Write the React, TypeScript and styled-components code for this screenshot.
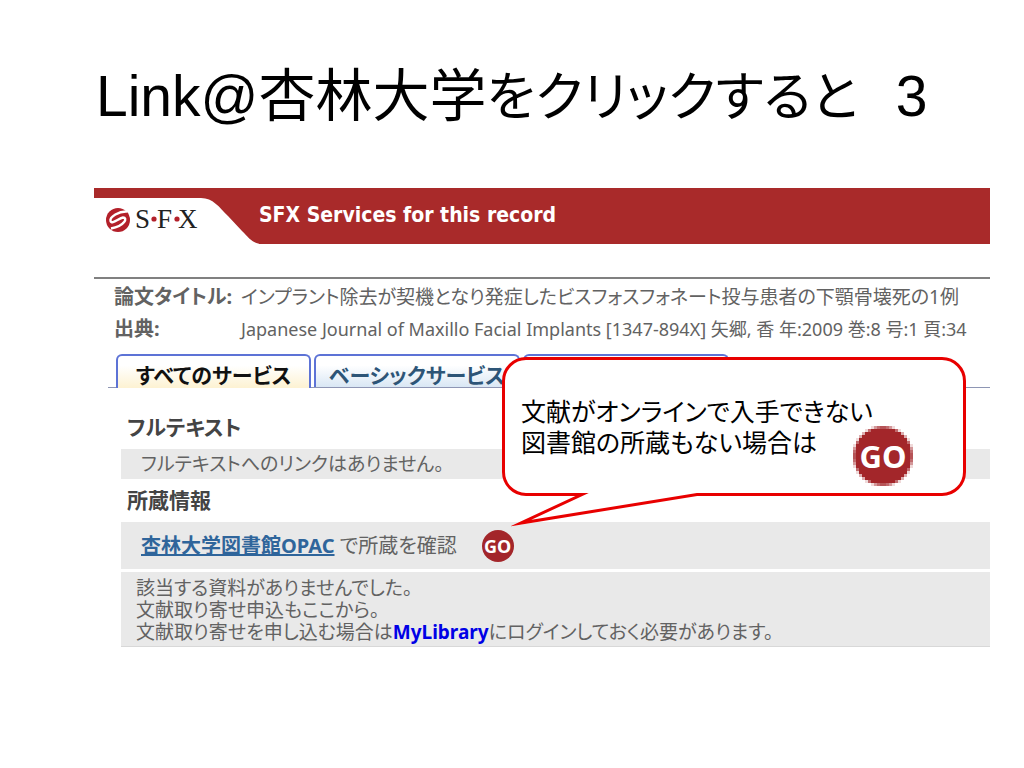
import React from "react";
import styled, { createGlobalStyle } from "styled-components";

const Global = createGlobalStyle`
  * { box-sizing: border-box; }
  body { margin: 0; background: #fff; }
  h1, h2, p, dl, dt, dd { margin: 0; }
`;

const Slide = styled.main`
  min-height: 100vh;
  padding: 60px 34px 60px 94px;
  color: #000;
  font-family: "Liberation Sans", "Noto Sans CJK JP", sans-serif;
`;

const SlideTitle = styled.h1`
  margin-bottom: 56px;
  padding-left: 2px;
  font-size: 57px;
  font-weight: 400;
  line-height: 72px;
  white-space: nowrap;
  font-feature-settings: "palt";
`;

const Kana = styled.span`
  font-size: 53px;
  line-height: 1;
`;

const Gap = styled.span`
  font-size: 38px;
  line-height: 1;
`;

const Record = styled.section`
  position: relative;
  color: #626262;
  font-family: "Noto Sans", "Noto Sans CJK JP", sans-serif;
  font-size: 19px;
  line-height: 32px;
  white-space: nowrap;
  font-feature-settings: "palt";
`;

const Banner = styled.header`
  display: flex;
  height: 56px;
  background: #a92a2a;
`;

const Logo = styled.svg`
  flex: none;
  display: block;
  width: 165px;
  height: 56px;
`;

const BannerTitle = styled.h2`
  color: #fff;
  font-family: "DejaVu Sans Condensed", "Noto Sans", sans-serif;
  font-size: 21px;
  font-weight: 700;
  line-height: 55px;
`;

const Meta = styled.dl`
  display: grid;
  grid-template-columns: 127px 1fr;
  margin-top: 33px;
  padding: 2px 0 9px 20px;
  border-top: 2px solid #808080;

  dt {
    font-size: 20px;
    font-weight: 700;
  }
`;

const Citation = styled.dd`
  font-size: 18px;
`;

const Tabs = styled.nav`
  display: flex;
  gap: 3px;
  margin-left: 14px;
  padding-left: 8px;
  border-bottom: 1px solid #8e96b4;
`;

const Tab = styled.button<{ $active?: boolean }>`
  width: ${(p) => (p.$active ? 195 : 206)}px;
  height: ${(p) => (p.$active ? 34 : 33)}px;
  margin-bottom: ${(p) => (p.$active ? -1 : 0)}px;
  padding: 4px 0 0;
  border: 2px solid #5d73d6;
  border-bottom: 0;
  border-radius: 6px 6px 0 0;
  background: linear-gradient(#fff 30%, ${(p) => (p.$active ? "#fdf2d2" : "#d9e7f4")});
  color: ${(p) => (p.$active ? "#111" : "#2d5577")};
  font: 700 21px/28px "Noto Sans CJK JP", sans-serif;
  font-feature-settings: inherit;
`;

const Results = styled.div`
  padding: 18px 0 0 27px;
`;

const GroupTitle = styled.h2`
  padding-left: 6px;
  color: #444;
  font-size: 21px;
  font-weight: 700;
  line-height: 43px;
`;

const Band = styled.div`
  display: flex;
  align-items: center;
  padding-left: 20px;
  background: #e9e9e9;
`;

const EmptyBand = styled(Band)`
  height: 30px;
`;

const ServiceBand = styled(Band)`
  height: 47px;
  gap: 24px;
  font-size: 20px;
`;

const NoteBand = styled(Band)`
  display: block;
  margin-top: 3px;
  padding: 5px 0 3px 15px;
  border-bottom: 1px solid #d8d8d8;
  line-height: 22px;
`;

const Link = styled.a`
  color: #2f659b;
  font-weight: 700;
  text-decoration: underline;
`;

const Highlight = styled.strong`
  color: #0000e6;
`;

const GoButton = styled.button<{ $size: number }>`
  position: relative;
  flex: none;
  display: block;
  width: ${(p) => p.$size}px;
  height: ${(p) => p.$size}px;
  padding: 0;
  border: 0;
  background: none;
  color: #fff;
  font: 700 ${(p) => (p.$size > 40 ? 31 : 18)}px/1 "Noto Sans", sans-serif;

  svg { position: absolute; inset: 0; }
  span { position: relative; }
`;

const Callout = styled.aside`
  position: absolute;
  top: 169px;
  right: 24px;
  display: flex;
  align-items: center;
  width: 464px;
  height: 139px;
  padding: 0 16px 2px;
  border: 3px solid #e80000;
  border-radius: 24px;
  background: #fff;
  color: #000;
  font-family: "Noto Sans CJK JP", sans-serif;
  font-size: 25px;
  line-height: 31px;
`;

const Tail = styled.svg`
  position: absolute;
  top: 132px;
  left: 6px;
  width: 190px;
  height: 36px;
`;

const CalloutGo = styled.div`
  position: absolute;
  right: 50px;
  bottom: 7px;
`;

const SmoothDisc = () => (
  <svg viewBox="0 0 34 34" aria-hidden="true">
    <circle cx="17" cy="17" r="16" fill="#a3262a" />
  </svg>
);

const GRID = 20;
const cells = Array.from({ length: GRID * GRID }, (_, i) => {
  const x = i % GRID;
  const y = Math.floor(i / GRID);
  const distance = Math.hypot(x - 9.5, y - 9.5);
  return { x, y, opacity: Math.max(0, Math.min(1, 10.3 - distance)) };
}).filter((c) => c.opacity > 0);

const PixelDisc = () => (
  <svg viewBox="0 0 20 20" shapeRendering="crispEdges" aria-hidden="true">
    {cells.map((c) => (
      <rect key={`${c.x}-${c.y}`} x={c.x} y={c.y} width="1" height="1" fill="#a3262a" opacity={c.opacity} />
    ))}
  </svg>
);

const SfxLogo = () => (
  <Logo viewBox="0 0 165 56" role="img" aria-label="SFX">
    <path d="M0 10H107C119 10 125 19 134 28L148 43C156 51 159 56 169 56H0Z" fill="#fff" />
    <circle cx="24" cy="32" r="12" fill="#b3202a" />
    <path
      d="M33 23.500C25 23 15.500 29 16.500 33C17.500 37 25 30 29 29.500C34 29.500 31 38 17 40.500"
      fill="none"
      stroke="#fff"
      strokeWidth="2.400"
    />
    <g fill="#222" fontFamily="Liberation Serif, serif" fontSize="27">
      <text x="41" y="40">S</text>
      <text x="63" y="40">F</text>
      <text x="84" y="40">X</text>
    </g>
    <circle cx="60" cy="31" r="2.6" fill="#b3202a" />
    <circle cx="83" cy="31" r="2.6" fill="#b3202a" />
  </Logo>
);

export default function App() {
  return (
    <>
      <Global />
      <Slide lang="ja">
        <SlideTitle>
          Link@杏林大学<Kana>をクリックすると</Kana><Gap>　</Gap>3
        </SlideTitle>
        <Record>
          <Banner>
            <SfxLogo />
            <BannerTitle>SFX Services for this record</BannerTitle>
          </Banner>
          <Meta>
            <dt>論文タイトル:</dt>
            <dd>インプラント除去が契機となり発症したビスフォスフォネート投与患者の下顎骨壊死の1例</dd>
            <dt>出典:</dt>
            <Citation>
              Japanese Journal of Maxillo Facial Implants [1347-894X] 矢郷, 香 年:2009 巻:8 号:1 頁:34
            </Citation>
          </Meta>
          <Tabs aria-label="サービス">
            <Tab type="button" $active>すべてのサービス</Tab>
            <Tab type="button">ベーシックサービス</Tab>
            <Tab type="button" />
          </Tabs>
          <Results>
            <GroupTitle>フルテキスト</GroupTitle>
            <EmptyBand>フルテキストへのリンクはありません。</EmptyBand>
            <GroupTitle>所蔵情報</GroupTitle>
            <ServiceBand>
              <p>
                <Link href="#opac">杏林大学図書館OPAC</Link> で所蔵を確認
              </p>
              <GoButton type="button" $size={34}>
                <SmoothDisc />
                <span>GO</span>
              </GoButton>
            </ServiceBand>
            <NoteBand>
              <p>該当する資料がありませんでした。</p>
              <p>文献取り寄せ申込もここから。</p>
              <p>
                文献取り寄せを申し込む場合は<Highlight>MyLibrary</Highlight>にログインしておく必要があります。
              </p>
            </NoteBand>
          </Results>
          <Callout>
            <Tail viewBox="0 0 190 36" aria-hidden="true">
              <path d="M70 0H186V4L8 33L70 4Z" fill="#fff" />
              <path d="M60 2.5H71L10 31L186 2.5H190" fill="none" stroke="#e80000" strokeWidth="3" strokeMiterlimit="10" />
            </Tail>
            <p>
              文献がオンラインで入手できない
              <br />
              図書館の所蔵もない場合は
            </p>
            <CalloutGo>
              <GoButton type="button" $size={60}>
                <PixelDisc />
                <span>GO</span>
              </GoButton>
            </CalloutGo>
          </Callout>
        </Record>
      </Slide>
    </>
  );
}
